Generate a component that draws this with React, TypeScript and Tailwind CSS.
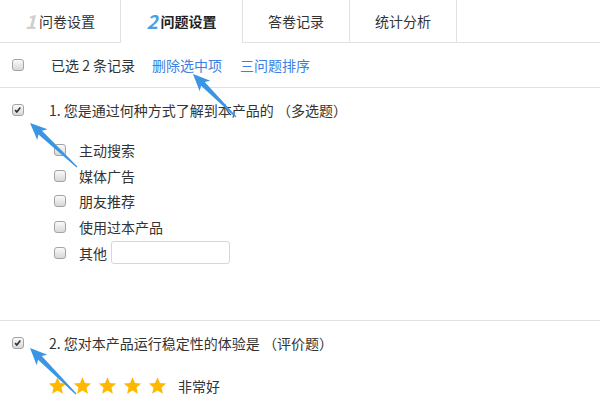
import React from 'react'

const font = { fontFamily: '"Noto Sans CJK SC", "Liberation Sans", sans-serif' }

function Box({ checked = false }: { checked?: boolean }) {
  return (
    <span className="relative inline-block w-[12px] h-[12px] shrink-0 rounded-[3px] border border-[#a3a3a3] bg-gradient-to-b from-[#fafafa] to-[#d8d8d8]">
      {checked && (
        <svg viewBox="0 0 12 12" className="absolute left-0 top-0 w-[10px] h-[10px]">
          <path d="M2.5 6.2 L4.6 8.3 L8.8 3" stroke="#333" strokeWidth="2" fill="none" />
        </svg>
      )}
    </span>
  )
}

function Star() {
  return (
    <svg viewBox="0 0 24 24" className="w-[19px] h-[19px]">
      <path d="M12 1.5l3.1 7.2 7.8.7-5.9 5.2 1.8 7.7L12 18.2 5.2 22.3 7 14.6 1.1 9.4l7.8-.7z" fill="#ffb800" />
    </svg>
  )
}

// annotation arrow: tip at (tx,ty), tail at (sx,sy)
function arrowPoints(tx: number, ty: number, sx: number, sy: number) {
  const len = Math.hypot(sx - tx, sy - ty)
  const dx = (sx - tx) / len
  const dy = (sy - ty) / len
  const nx = -dy
  const ny = dx
  const p = (a: number, w: number) => `${tx + dx * a + nx * w},${ty + dy * a + ny * w}`
  return [p(0, 0), p(17, 7.5), p(14, 2.6), p(len, 0.6), p(len, -0.6), p(14, -2.6), p(17, -7.5)].join(' ')
}

const tabs = [
  { num: '1', label: '问卷设置', w: 'w-[121px]' },
  { num: '2', label: '问题设置', w: 'w-[122px]', active: true },
  { label: '答卷记录', w: 'w-[107px]' },
  { label: '统计分析', w: 'w-[107px]' },
]

const options = ['主动搜索', '媒体广告', '朋友推荐', '使用过本产品']

export default function App() {
  return (
    <div className="relative w-[600px] h-[400px] overflow-hidden bg-white text-[14px] text-[#333]" style={font}>
      {/* tabs */}
      <div className="flex h-[43px]">
        {tabs.map((t) => (
          <div
            key={t.label}
            className={`${t.w} flex items-center justify-center border-r border-[#e2e2e2] ${t.active ? 'bg-white' : 'border-b'}`}
          >
            {t.num && (
              <span className={`italic text-[19px] font-bold mr-[3px] ${t.active ? 'text-[#4a9de8]' : 'text-[#cfcfcf]'}`}>{t.num}</span>
            )}
            <span className={t.active ? 'font-bold text-[#222]' : 'text-[#333]'}>{t.label}</span>
          </div>
        ))}
        <div className="flex-1 border-b border-[#e2e2e2]" />
      </div>

      {/* toolbar */}
      <div className="flex items-center h-[45px] border-b border-[#e2e2e2] pl-[12px]">
        <Box />
        <span className="ml-[27px] leading-none">已选 2 条记录</span>
        <span className="ml-[17px] leading-none text-[#3b7fe8]">删除选中项</span>
        <span className="ml-[18px] leading-none text-[#3b7fe8]">三问题排序</span>
      </div>

      {/* question 1 */}
      <div className="h-[233px] border-b border-[#e2e2e2]">
        <div className="flex items-center h-[42px] pl-[12px] pt-[1px]">
          <Box checked />
          <span className="ml-[25px] leading-none">1. 您是通过何种方式了解到本产品的 （多选题）</span>
        </div>
        <div className="flex flex-col pl-[54px] pt-[7px]">
          {options.map((o) => (
            <div key={o} className="flex items-center h-[25.7px]">
              <Box />
              <span className="ml-[13px] leading-none">{o}</span>
            </div>
          ))}
          <div className="flex items-center h-[25.7px]">
            <Box />
            <span className="ml-[13px] leading-none">其他</span>
            <span className="ml-[4px] w-[119px] h-[23px] border border-[#d6d6d6] rounded-[3px]" />
          </div>
        </div>
      </div>

      {/* question 2 */}
      <div>
        <div className="flex items-center h-[43px] pl-[12px]">
          <Box checked />
          <span className="ml-[25px] leading-none">2. 您对本产品运行稳定性的体验是 （评价题）</span>
        </div>
        <div className="flex items-center pl-[48px] pt-[12px] gap-[6px]">
          <Star />
          <Star />
          <Star />
          <Star />
          <Star />
          <span className="ml-[5px] leading-none">非常好</span>
        </div>
      </div>

      {/* annotation arrows */}
      <svg className="absolute inset-0 pointer-events-none" width="600" height="400">
        <polygon points={arrowPoints(193, 74, 236, 117)} fill="#3a95e4" />
        <polygon points={arrowPoints(30, 123, 77, 167)} fill="#3a95e4" />
        <polygon points={arrowPoints(30, 348, 76, 394)} fill="#3a95e4" />
      </svg>
    </div>
  )
}
